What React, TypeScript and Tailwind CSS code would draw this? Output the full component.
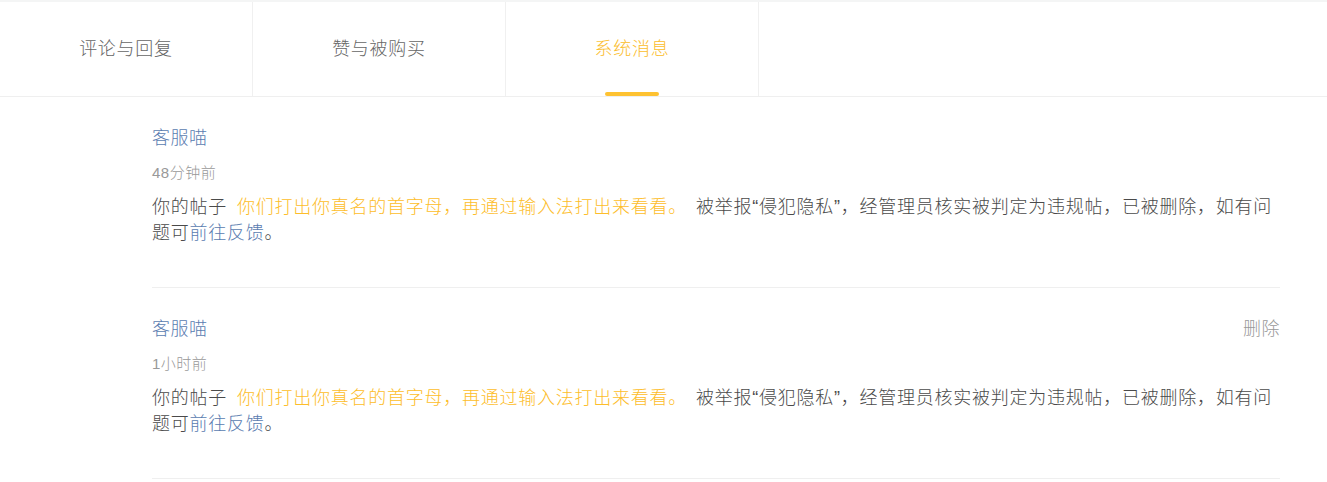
import React from "react";

const tabs = ["评论与回复", "赞与被购买", "系统消息"];

const messages = [
  { id: 1, name: "客服喵", time: "48分钟前", canDelete: false },
  { id: 2, name: "客服喵", time: "1小时前", canDelete: true },
];

function Tabs() {
  const active = 2;
  return (
    <div className="flex h-[95px] border-b border-[#efefef] bg-white">
      {tabs.map((t, i) => (
        <div
          key={t}
          className="relative flex w-[253px] items-center justify-center border-r border-[#f0f0f0] text-[18px] tracking-[0.75px]"
        >
          <span className={i === active ? "text-[#fbbd2c]" : "text-[#666]"}>{t}</span>
          {i === active ? (
            <span className="absolute bottom-0 left-1/2 h-[4px] w-[54px] -translate-x-1/2 rounded-full bg-[#fec231]" />
          ) : null}
        </div>
      ))}
    </div>
  );
}

function Message({ name, time, canDelete }: { name: string; time: string; canDelete: boolean }) {
  return (
    <div className="border-b border-[#efefef] pt-[29px] pb-[41px]">
      <div className="flex h-[24px] items-center justify-between text-[18px] tracking-[0.5px]">
        <span className="text-[#5a7cb0]">{name}</span>
        {canDelete ? <span className="cursor-pointer text-[#999]">删除</span> : null}
      </div>
      <div className="mt-[13px] h-[20px] text-[15px] leading-[20px] tracking-[0.5px] text-[#999]">{time}</div>
      <p className="mt-[11px] text-[18px] leading-[26px] tracking-[0.75px] text-[#4a4a4a]">
        <span>你的帖子</span>
        <span className="ml-[10px] mr-[9px] text-[#fdbd2a]">你们打出你真名的首字母，再通过输入法打出来看看。</span>
        <span>被举报“侵犯隐私”，经管理员核实被判定为违规帖，已被删除，如有问</span>
        <span>题可</span>
        <a className="cursor-pointer text-[#5a7cb0]">前往反馈</a>
        <span>。</span>
      </p>
    </div>
  );
}

export default function App() {
  return (
    <div
      className="min-h-[482px] bg-white font-light"
      style={{ fontFamily: '"Liberation Sans", "Noto Sans CJK SC", sans-serif' }}
    >
      <div className="h-[2px] bg-[#f4f5f5]" />
      <Tabs />
      <div className="pl-[152px] pr-[47px]">
        {messages.map((m) => (
          <Message key={m.id} name={m.name} time={m.time} canDelete={m.canDelete} />
        ))}
      </div>
    </div>
  );
}
